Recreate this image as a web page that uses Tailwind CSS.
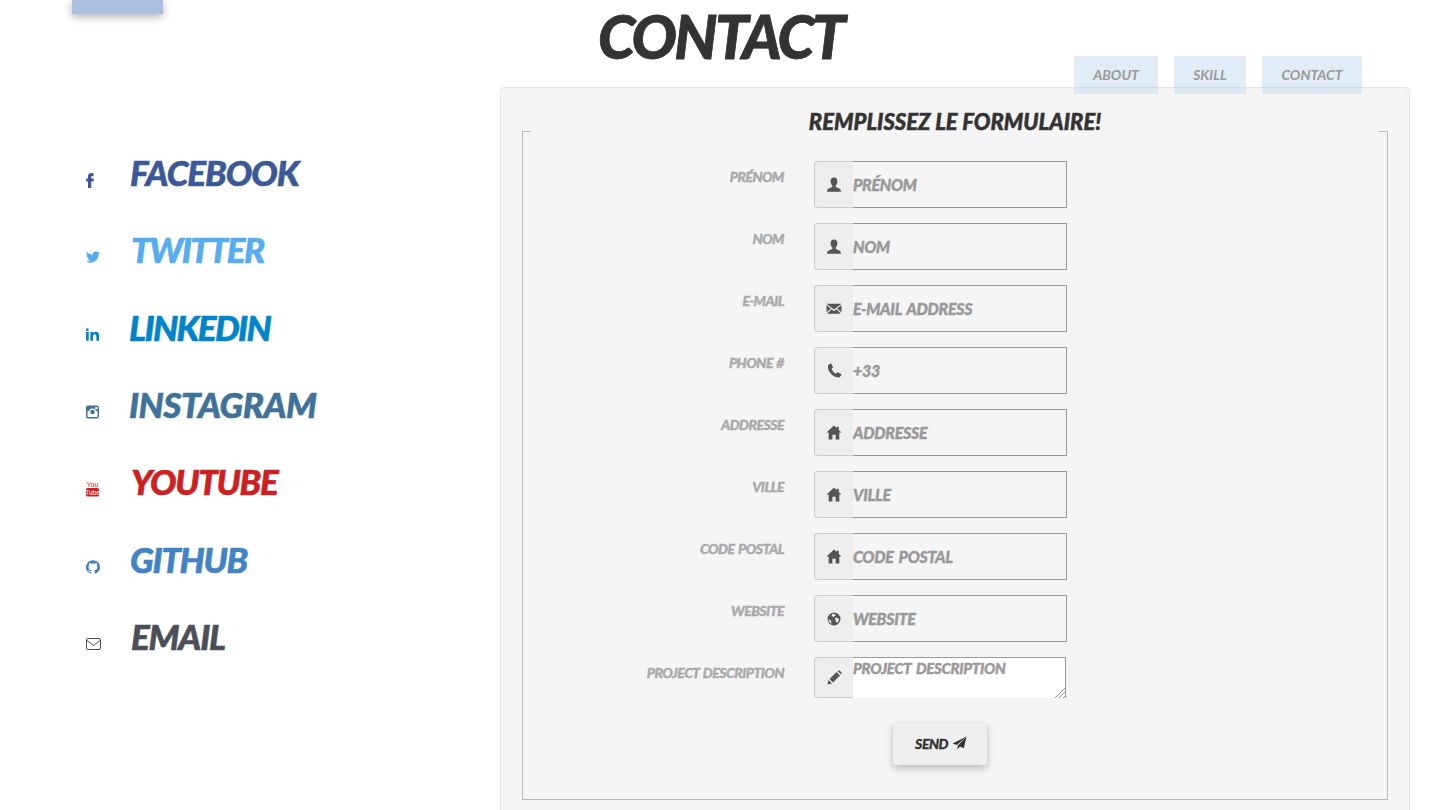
<!DOCTYPE html>
<html lang="en">
<head>
    <meta charset="UTF-8">
    <meta name="viewport" content="width=device-width, initial-scale=1.0">
    <title>Contact</title>
    <script src="https://cdn.jsdelivr.net/npm/@tailwindcss/browser@4"></script>
</head>
<body class="relative h-screen overflow-hidden bg-white font-['Lato',sans-serif] italic uppercase">
    <!-- Menu tab, top left -->
    <div class="absolute left-[72px] top-0 h-[14px] w-[91px] bg-[#abbedd] shadow-[0_3px_8px_rgba(0,0,0,0.3)]"></div>

    <!-- Nav over the panel -->
    <nav class="absolute left-[1074px] top-[56px] z-10 flex gap-4 text-[14px] font-bold text-[#999]">
        <a class="flex h-[38px] w-[84px] items-center justify-center bg-[#c8dcee]/55 pb-[2px]">About</a>
        <a class="flex h-[38px] w-[72px] items-center justify-center bg-[#c8dcee]/55 pb-[2px]">Skill</a>
        <a class="flex h-[38px] w-[100px] items-center justify-center bg-[#c8dcee]/55 pb-[2px]">Contact</a>
    </nav>

    <div class="grid grid-cols-[500px_910px]">
        <!-- Social links -->
        <ul class="flex flex-col pl-[86px] pt-[150px] text-[35px] leading-[44px] font-black [-webkit-text-stroke:0.6px]">
            <li class="flex h-[77.33px] text-[#3b5998] tracking-[-1px]">
                <svg class="mt-[23px] h-[15px] w-[8px]" viewBox="7 3.500 10.500 20.500" fill="currentColor"><path d="M14 8h3V3.500h-3c-2.800 0-4.500 1.800-4.500 4.500v3H7v4h2.500v9h4.500v-9h3l.500-4h-3.500V8.500c0-.300.200-.500.500-.500z"/></svg>
                <span class="ml-[36px]">Facebook</span>
            </li>
            <li class="flex h-[77.33px] text-[#55acee] tracking-[-1.500px]">
                <svg class="mt-[23px] h-[14px] w-[14px]" viewBox="0 0 24 24" fill="currentColor"><path d="M23.950 4.570a10 10 0 0 1-2.820.770 4.960 4.960 0 0 0 2.160-2.720c-.950.550-2 .960-3.120 1.190a4.920 4.920 0 0 0-8.380 4.480C7.690 8.100 4.070 6.130 1.640 3.160a4.820 4.820 0 0 0-.670 2.480c0 1.710.870 3.210 2.190 4.100a4.900 4.900 0 0 1-2.230-.610v.060c0 2.390 1.700 4.380 3.950 4.830a5 5 0 0 1-2.210.080 4.940 4.940 0 0 0 4.600 3.420A9.870 9.870 0 0 1 0 19.540a14 14 0 0 0 7.560 2.210c9.050 0 14-7.500 14-13.980 0-.210 0-.420-.020-.630a9.940 9.940 0 0 0 2.460-2.550z"/></svg>
                <span class="ml-[31px]">Twitter</span>
            </li>
            <li class="flex h-[77.33px] text-[#0085cc] tracking-[-1.600px]">
                <svg class="mt-[23px] h-[13px] w-[13px]" viewBox="3 3 19 18" fill="currentColor"><path d="M6.940 5a2 2 0 1 1-4-.002 2 2 0 0 1 4 .002zM7 8.480H3V21h4V8.480zm6.320 0H9.340V21h3.940v-6.570c0-3.660 4.770-4 4.770 0V21H22v-7.930c0-6.170-7.060-5.940-8.720-2.910l.040-1.680z"/></svg>
                <span class="ml-[30px]">LinkedIn</span>
            </li>
            <li class="flex h-[77.33px] text-[#3f729b] tracking-[-0.500px]">
                <svg class="mt-[23px] h-[14px] w-[14px]" viewBox="0 0 14 14"><rect width="13" height="13" x="0" y="0.500" rx="2" fill="currentColor"/><rect x="1.500" y="6" width="10" height="6" fill="#fff"/><circle cx="6.500" cy="7" r="3.400" fill="#fff"/><circle cx="6.500" cy="7" r="2.200" fill="currentColor"/><rect x="9.300" y="2" width="2.300" height="2.300" fill="#fff"/></svg>
                <span class="ml-[29px]">Instagram</span>
            </li>
            <li class="flex h-[77.33px] text-[#cd201f] tracking-[-1.300px]">
                <svg class="mt-[22px] h-[16px] w-[14px] font-normal not-italic normal-case tracking-normal [-webkit-text-stroke:0]" viewBox="0 0 14 16"><text x="6.500" y="6.300" text-anchor="middle" font-size="7" font-family="Liberation Sans" fill="currentColor">You</text><rect y="7" width="13" height="8.500" rx="1.500" fill="currentColor"/><text x="6.500" y="13.800" text-anchor="middle" font-size="6.500" font-family="Liberation Sans" fill="#fff">Tube</text></svg>
                <span class="ml-[31px]">YouTube</span>
            </li>
            <li class="flex h-[77.33px] text-[#4183c4] tracking-[-1.300px]">
                <svg class="mt-[23px] h-[14px] w-[14px]" viewBox="0 0 24 24" fill="currentColor"><path d="M12 .3a12 12 0 0 0-3.800 23.400c.6.100.8-.3.8-.6v-2c-3.300.7-4-1.600-4-1.600-.6-1.400-1.400-1.800-1.400-1.800-1-.7.100-.7.100-.7 1.200 0 1.900 1.200 1.900 1.200 1 1.800 2.800 1.300 3.500 1 0-.8.400-1.300.7-1.600-2.700-.3-5.500-1.300-5.500-6 0-1.200.5-2.300 1.300-3.100-.2-.4-.6-1.600 0-3.200 0 0 1-.3 3.400 1.200a11.500 11.500 0 0 1 6 0c2.300-1.500 3.300-1.200 3.300-1.200.6 1.600.2 2.800 0 3.200.9.800 1.300 1.900 1.300 3.200 0 4.600-2.800 5.600-5.500 5.900.5.400.9 1 .9 2.200v3.300c0 .3.100.7.800.6A12 12 0 0 0 12 .3"/></svg>
                <span class="ml-[30px]">Github</span>
            </li>
            <li class="flex h-[77.33px] text-[#4a4f5a] tracking-[-1.200px]">
                <svg class="mt-[23px] h-[14px] w-[15px]" viewBox="0 0 15 14" fill="none" stroke="currentColor" stroke-width="1"><rect x="0.500" y="1.500" width="14" height="11" rx="1.500"/><path d="M1 3.500l6.500 5 6.500-5"/></svg>
                <span class="ml-[30px]">Email</span>
            </li>
        </ul>

        <main>
            <h1 class="h-[87px] pl-[98px] pt-[2px] text-[60px] leading-[68px] font-black tracking-[-2.600px] text-[#333] [-webkit-text-stroke:0.8px]">Contact</h1>

            <!-- Form panel -->
            <section class="rounded-t-[4px] border border-[#e3e3e3] bg-[#f5f5f5] pt-[23px] pr-[21px] pb-[20px] pl-[21px]">
                <form>
                    <fieldset class="border border-[#bbb] pb-[34px]">
                        <legend class="mx-auto h-10 w-[848px] text-center text-[22px] leading-[22px] font-black text-[#333] [-webkit-text-stroke:0.5px]">Remplissez le formulaire!</legend>

                        <div class="flex flex-col gap-[15px] pt-[10px] text-[14px] font-black tracking-[-0.500px] [-webkit-text-stroke:0.4px] [word-spacing:1px]">
                            <div class="flex">
                                <label class="w-[261px] pt-[7px] text-right leading-[18px] text-[#aaa]">Prénom</label>
                                <div class="ml-[30px] flex h-[47px] w-[253px]">
                                    <span class="flex w-[39px] items-center justify-center rounded-l-[4px] border border-r-0 border-[#ccc] bg-[#eee] text-[#555]">
                                        <svg class="h-[16px] w-[16px]" viewBox="0 0 14 14" fill="currentColor"><path d="M7 0.500c2 0 3 1.500 3 3.300 0 1.500-.7 2.900-1.500 3.700v1.300c1.800.7 4.500 1.500 4.500 3.200v1H1v-1c0-1.700 2.700-2.500 4.500-3.200V7.500C4.700 6.700 4 5.300 4 3.800 4 2 5 .5 7 .5z"/></svg>
                                    </span>
                                    <input type="text" placeholder="Prénom" class="min-w-0 flex-1 border border-l-0 border-[#999] bg-[#f5f5f5] text-[16px] uppercase italic font-black tracking-[-0.300px] [word-spacing:2px] outline-none placeholder:text-[#999]">
                                </div>
                            </div>
                            <div class="flex">
                                <label class="w-[261px] pt-[7px] text-right leading-[18px] text-[#aaa]">Nom</label>
                                <div class="ml-[30px] flex h-[47px] w-[253px]">
                                    <span class="flex w-[39px] items-center justify-center rounded-l-[4px] border border-r-0 border-[#ccc] bg-[#eee] text-[#555]">
                                        <svg class="h-[16px] w-[16px]" viewBox="0 0 14 14" fill="currentColor"><path d="M7 0.500c2 0 3 1.500 3 3.300 0 1.500-.7 2.900-1.500 3.700v1.300c1.800.7 4.500 1.500 4.500 3.200v1H1v-1c0-1.700 2.700-2.500 4.500-3.200V7.500C4.700 6.700 4 5.300 4 3.800 4 2 5 .5 7 .5z"/></svg>
                                    </span>
                                    <input type="text" placeholder="Nom" class="min-w-0 flex-1 border border-l-0 border-[#999] bg-[#f5f5f5] text-[16px] uppercase italic font-black tracking-[-0.300px] [word-spacing:2px] outline-none placeholder:text-[#999]">
                                </div>
                            </div>
                            <div class="flex">
                                <label class="w-[261px] pt-[7px] text-right leading-[18px] text-[#aaa]">E-Mail</label>
                                <div class="ml-[30px] flex h-[47px] w-[253px]">
                                    <span class="flex w-[39px] items-center justify-center rounded-l-[4px] border border-r-0 border-[#ccc] bg-[#eee] text-[#555]">
                                        <svg class="h-[15px] w-[16px]" viewBox="0 0 15 14" fill="currentColor"><path d="M0.500 2.500h14l-7 5.500zM0.500 3.800l4 3.200-4 3.700zM14.500 3.800l-4 3.200 4 3.700zM5.300 7.700l2.200 1.800 2.200-1.800 4.300 4.300H1z"/></svg>
                                    </span>
                                    <input type="email" placeholder="E-Mail Address" class="min-w-0 flex-1 border border-l-0 border-[#999] bg-[#f5f5f5] text-[16px] uppercase italic font-black tracking-[-0.300px] [word-spacing:2px] outline-none placeholder:text-[#999]">
                                </div>
                            </div>
                            <div class="flex">
                                <label class="w-[261px] pt-[7px] text-right leading-[18px] text-[#aaa]">Phone #</label>
                                <div class="ml-[30px] flex h-[47px] w-[253px]">
                                    <span class="flex w-[39px] items-center justify-center rounded-l-[4px] border border-r-0 border-[#ccc] bg-[#eee] text-[#555]">
                                        <svg class="h-[15px] w-[15px]" viewBox="0 0 14 14" fill="currentColor"><path d="M3.300 0.500L1 2c-.5 3 .5 5.500 2.500 7.700 2.200 2.300 4.500 3.600 8 3.800l2-2.300c.2-.3.100-.6-.2-.8L10.300 8.700c-.3-.1-.6-.1-.8.1l-1 1.200C6.800 9.200 5 7.400 4.200 5.600l1.200-1.100c.2-.2.300-.5.100-.8L4 .7c-.2-.3-.4-.4-.7-.2z"/></svg>
                                    </span>
                                    <input type="tel" placeholder="+33" class="min-w-0 flex-1 border border-l-0 border-[#999] bg-[#f5f5f5] text-[16px] uppercase italic font-black tracking-[-0.300px] [word-spacing:2px] outline-none placeholder:text-[#999]">
                                </div>
                            </div>
                            <div class="flex">
                                <label class="w-[261px] pt-[7px] text-right leading-[18px] text-[#aaa]">Addresse</label>
                                <div class="ml-[30px] flex h-[47px] w-[253px]">
                                    <span class="flex w-[39px] items-center justify-center rounded-l-[4px] border border-r-0 border-[#ccc] bg-[#eee] text-[#555]">
                                        <svg class="h-[15px] w-[16px]" viewBox="0 0 15 14" fill="currentColor"><path d="M7.500 0.500L0.500 7h2v6.500h3.500V9h3v4.500h3.500V7h2l-2.500-2.300V1.500h-2v1.300z"/></svg>
                                    </span>
                                    <input type="text" placeholder="Addresse" class="min-w-0 flex-1 border border-l-0 border-[#999] bg-[#f5f5f5] text-[16px] uppercase italic font-black tracking-[-0.300px] [word-spacing:2px] outline-none placeholder:text-[#999]">
                                </div>
                            </div>
                            <div class="flex">
                                <label class="w-[261px] pt-[7px] text-right leading-[18px] text-[#aaa]">Ville</label>
                                <div class="ml-[30px] flex h-[47px] w-[253px]">
                                    <span class="flex w-[39px] items-center justify-center rounded-l-[4px] border border-r-0 border-[#ccc] bg-[#eee] text-[#555]">
                                        <svg class="h-[15px] w-[16px]" viewBox="0 0 15 14" fill="currentColor"><path d="M7.500 0.500L0.500 7h2v6.500h3.500V9h3v4.500h3.500V7h2l-2.500-2.300V1.500h-2v1.300z"/></svg>
                                    </span>
                                    <input type="text" placeholder="Ville" class="min-w-0 flex-1 border border-l-0 border-[#999] bg-[#f5f5f5] text-[16px] uppercase italic font-black tracking-[-0.300px] [word-spacing:2px] outline-none placeholder:text-[#999]">
                                </div>
                            </div>
                            <div class="flex">
                                <label class="w-[261px] pt-[7px] text-right leading-[18px] text-[#aaa]">Code Postal</label>
                                <div class="ml-[30px] flex h-[47px] w-[253px]">
                                    <span class="flex w-[39px] items-center justify-center rounded-l-[4px] border border-r-0 border-[#ccc] bg-[#eee] text-[#555]">
                                        <svg class="h-[15px] w-[16px]" viewBox="0 0 15 14" fill="currentColor"><path d="M7.500 0.500L0.500 7h2v6.500h3.500V9h3v4.500h3.500V7h2l-2.500-2.300V1.500h-2v1.300z"/></svg>
                                    </span>
                                    <input type="text" placeholder="Code Postal" class="min-w-0 flex-1 border border-l-0 border-[#999] bg-[#f5f5f5] text-[16px] uppercase italic font-black tracking-[-0.300px] [word-spacing:2px] outline-none placeholder:text-[#999]">
                                </div>
                            </div>
                            <div class="flex">
                                <label class="w-[261px] pt-[7px] text-right leading-[18px] text-[#aaa]">Website</label>
                                <div class="ml-[30px] flex h-[47px] w-[253px]">
                                    <span class="flex w-[39px] items-center justify-center rounded-l-[4px] border border-r-0 border-[#ccc] bg-[#eee] text-[#555]">
                                        <svg class="h-[14px] w-[14px]" viewBox="0 0 14 14"><circle cx="7" cy="7" r="6.500" fill="currentColor"/><path d="M5.500 1.500c1 .7 2.500.5 3.500 1.500-.5 1-2 1-2.500 2-.7 0-1.500-1-2-.5zM8 6c1.500-.5 3.500 0 4 1.500-.2 1.500-1 2.500-2 3.500-1-1-1.500-3-2-5zM1.500 7c1 .5 2 1 2.500 2 0 1 .5 2 .5 3C3 11 1.700 9 1.500 7z" fill="#eee"/></svg>
                                    </span>
                                    <input type="url" placeholder="Website" class="min-w-0 flex-1 border border-l-0 border-[#999] bg-[#f5f5f5] text-[16px] uppercase italic font-black tracking-[-0.300px] [word-spacing:2px] outline-none placeholder:text-[#999]">
                                </div>
                            </div>
                            <div class="flex">
                                <label class="w-[261px] pt-[7px] text-right leading-[18px] text-[#aaa]">Project Description</label>
                                <div class="ml-[30px] flex h-[41px] w-[252px]">
                                    <span class="flex w-[39px] items-center justify-center rounded-l-[4px] border border-r-0 border-[#ccc] bg-[#eee] text-[#555]">
                                        <svg class="h-[15px] w-[15px]" viewBox="0 0 15 15" fill="currentColor"><path d="M0.500 14.500l1-4.500 3.500 3.500zM2.500 9l7-7 3.500 3.500-7 7zM10.500 1l1-.5c.5-.2 1 0 1.300.2l1.500 1.500c.3.300.4.800.2 1.300l-.5 1z"/></svg>
                                    </span>
                                    <div class="relative flex min-w-0 flex-1">
                                        <textarea placeholder="Project Description" class="min-w-0 flex-1 resize-none border-t border-r border-[#999] bg-white text-[15px] leading-[20px] uppercase italic font-black tracking-[-0.300px] [word-spacing:2px] outline-none placeholder:text-[#999]"></textarea>
                                        <!-- resize grip -->
                                        <svg class="pointer-events-none absolute right-0 bottom-0 h-3 w-3" viewBox="0 0 12 12" fill="none" stroke="#999" stroke-width="1"><path d="M1 12L12 1M5 12l7-7M9 12l3-3"/></svg>
                                    </div>
                                </div>
                            </div>
                        </div>

                        <div class="flex pl-[370px] pt-[25px]">
                            <button type="button" class="flex h-[42px] w-[94px] items-center justify-center gap-1 rounded-[2px] bg-[#eee] pb-[2px] pl-[2px] text-[14px] uppercase italic font-black tracking-[-0.500px] text-[#333] shadow-[0_3px_7px_rgba(0,0,0,0.25)] [-webkit-text-stroke:0.3px]">
                                Send
                                <svg class="h-[14px] w-[15px]" viewBox="0 0 14 13" fill="currentColor"><path d="M13.500 0.500L0.500 7l4 1.300zM13.500 0.500L5.500 8.800l-.5 3.700 2.500-2.700 3.500 1.700z"/></svg>
                            </button>
                        </div>
                    </fieldset>
                </form>
            </section>
        </main>
    </div>
</body>
</html>
